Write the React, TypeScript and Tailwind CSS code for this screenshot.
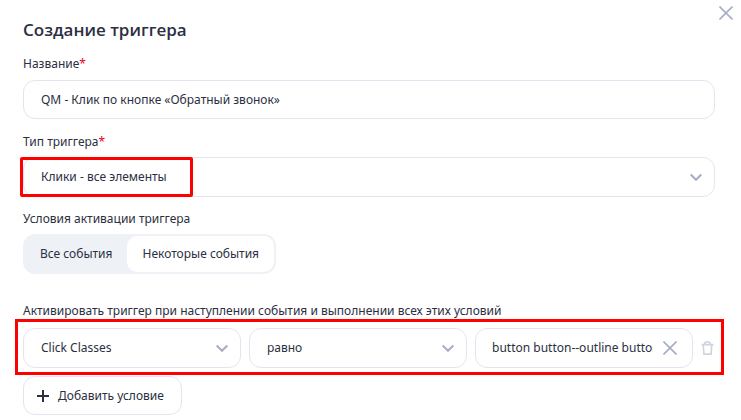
import { useState } from "react";

interface SelectFieldProps {
  id: string;
  label?: string;
  options: string[];
}

const Cross = () => (
  <svg width="14" height="14" viewBox="0 0 14 14" fill="none" stroke="currentColor" strokeWidth="1.6">
    <path d="M0.5 0.5 13.5 13.5M13.5 0.5 0.5 13.5" />
  </svg>
);

const Required = () => <span className="text-[#e6001f]">*</span>;

function SelectField({ id, label, options }: SelectFieldProps) {
  return (
    <div className="grid min-w-0 flex-1 items-center">
      <select
        id={id}
        aria-label={label}
        className="col-start-1 row-start-1 h-10 w-full appearance-none rounded-xl border border-[#e4e4f0] bg-white pr-9 pl-[17px]"
      >
        {options.map((option) => (
          <option key={option}>{option}</option>
        ))}
      </select>
      <svg
        className="pointer-events-none col-start-1 row-start-1 mr-[13px] justify-self-end text-[#a6adc4]"
        width="12"
        height="8"
        viewBox="0 0 12 8"
        fill="none"
        stroke="currentColor"
        strokeWidth="2"
      >
        <path d="M0.7 1.5 6 6.8 11.3 1.5" />
      </svg>
    </div>
  );
}

function App() {
  const [name, setName] = useState("QM - Клик по кнопке «Обратный звонок»");
  const [mode, setMode] = useState("some");
  const [value, setValue] = useState("button button--outline button--small");

  const modes = [
    { id: "all", title: "Все события" },
    { id: "some", title: "Некоторые события" },
  ];

  return (
    <div className="bg-white pr-[26px] pl-[23px] font-['Noto_Sans',sans-serif] text-[12px] leading-5 text-[#2b2f42]">
      <header className="flex items-start justify-between pt-[6px]">
        <h1 className="pt-3 font-['Open_Sans',sans-serif] text-[17px] leading-6 font-semibold">Создание триггера</h1>
        <button type="button" aria-label="Закрыть" className="-mr-[18px] text-[#a6adc4]">
          <Cross />
        </button>
      </header>

      <form onSubmit={(e) => e.preventDefault()}>
        <div className="flex flex-col gap-[6px] pt-3">
          <label htmlFor="name">
            Название
            <Required />
          </label>
          <input
            id="name"
            value={name}
            onChange={(e) => setName(e.target.value)}
            className="h-[39px] rounded-xl border border-[#e4e4f0] px-[17px]"
          />
        </div>

        <div className="flex flex-col gap-[5px] pt-[13px]">
          <label htmlFor="type">
            Тип триггера
            <Required />
          </label>
          <div className="relative flex">
            <SelectField id="type" options={["Клики - все элементы", "Клики - только ссылки"]} />
            <div className="pointer-events-none absolute inset-y-0 -left-[3px] w-[173px] rounded-xs border-3 border-[#ff0000]" />
          </div>
        </div>

        <fieldset className="pt-3">
          <legend className="float-left w-full pb-[5px]">Условия активации триггера</legend>
          <div className="clear-both flex w-fit rounded-xl bg-[#eef2f7] p-[2px]">
            {modes.map((item) => (
              <label
                key={item.id}
                className="flex h-9 cursor-pointer items-center rounded-[10px] px-[15px] has-checked:bg-white"
              >
                <input
                  type="radio"
                  name="mode"
                  className="sr-only"
                  checked={mode === item.id}
                  onChange={() => setMode(item.id)}
                />
                {item.title}
              </label>
            ))}
          </div>
        </fieldset>

        <p className="pt-[27px]">Активировать триггер при наступлении события и выполнении всех этих условий</p>
        <div className="relative mt-[7px] flex items-center gap-2">
          <div className="grid min-w-0 flex-1 grid-cols-3 gap-2">
            <SelectField id="variable" label="Переменная" options={["Click Classes", "Click ID"]} />
            <SelectField id="operator" label="Оператор" options={["равно", "не равно"]} />
            <div className="flex h-10 min-w-0 items-center gap-[10px] rounded-xl border border-[#e4e4f0] pr-[15px] pl-4">
              <input
                aria-label="Значение"
                value={value}
                onChange={(e) => setValue(e.target.value)}
                className="w-full min-w-0 flex-1"
              />
              <button type="button" aria-label="Очистить" className="text-[#a6adc4]" onClick={() => setValue("")}>
                <Cross />
              </button>
            </div>
          </div>
          <button type="button" aria-label="Удалить условие" className="text-[#cfd3e0]">
            <svg width="14" height="14" viewBox="0 0 14 14" fill="none" stroke="currentColor" strokeWidth="1.6">
              <path d="M0.5 3.6H12.5M3.6 3.2C3.6 0 9.4 0 9.4 3.2M2.2 3.6 2.9 13.1H10.1L10.8 3.6" />
            </svg>
          </button>
          <div className="pointer-events-none absolute -top-[9px] -right-[9px] -bottom-[7px] -left-2 border-3 border-[#ff0000]" />
        </div>

        <button
          type="button"
          className="mt-2 flex h-[39px] items-center gap-[9px] rounded-xl border border-[#e4e4f0] px-[13px]"
        >
          <svg width="12" height="12" viewBox="0 0 12 12" fill="none" stroke="currentColor" strokeWidth="2">
            <path d="M6 0V12M0 6H12" />
          </svg>
          <span className="pr-1">Добавить условие</span>
        </button>
      </form>
    </div>
  );
}

export default App;
